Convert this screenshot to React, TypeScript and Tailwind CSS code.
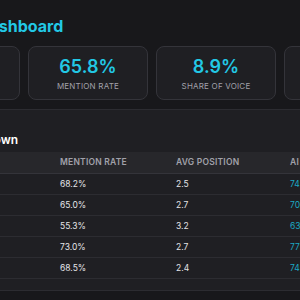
import React from 'react';

const stats = [
  { value: '42', label: 'TOTAL MENTIONS' },
  { value: '65.8%', label: 'MENTION RATE' },
  { value: '8.9%', label: 'SHARE OF VOICE' },
  { value: '2.7', label: 'AVG POSITION' },
];

const rows = [
  { name: 'ChatGPT', rate: '68.2%', pos: '2.5', score: '74' },
  { name: 'Claude', rate: '65.0%', pos: '2.7', score: '70' },
  { name: 'Gemini', rate: '55.3%', pos: '3.2', score: '63' },
  { name: 'Perplexity', rate: '73.0%', pos: '2.7', score: '77' },
  { name: 'Copilot', rate: '68.5%', pos: '2.4', score: '74' },
];

export default function App() {
  return (
    <div
      className="w-[300px] h-[300px] overflow-hidden bg-[#18181b] text-white"
      style={{ fontFamily: 'Inter, "Noto Sans", sans-serif' }}
    >
      <div className="ml-[-100px] w-[520px] pt-[14px]">
        <h1 className="ml-[78px] text-[16px] leading-6 font-bold text-[#22c8e5]">Dashboard</h1>

        <div className="mt-[8px] flex gap-[8px]">
          {stats.map((s) => (
            <div
              key={s.label}
              className="w-[120px] h-[54px] shrink-0 rounded-lg border border-[#34343a] bg-[#1f1f23] flex flex-col items-center justify-center"
            >
              <span className="text-[18px] leading-6 font-semibold text-[#22c8e5]">{s.value}</span>
              <span className="mt-[1px] text-[8px] leading-3 tracking-wide text-[#a1a1aa]">{s.label}</span>
            </div>
          ))}
        </div>

        <div className="mt-[9px] rounded-lg border border-[#2c2c31] bg-[#1f1f23] pt-[22px] pb-[11px]">
          <h2 className="ml-[0px] text-[12px] leading-4 font-semibold text-white whitespace-nowrap">
            Platform Breakdown
          </h2>
          <div className="mt-[4px]">
            <div className="grid grid-cols-[159px_116px_114px_120px] h-[22px] items-center bg-[#27272b] border-b border-[#34343a] text-[8.5px] font-semibold text-[#a1a1aa] tracking-wide">
              <span className="pl-5">PLATFORM</span>
              <span>MENTION RATE</span>
              <span>AVG POSITION</span>
              <span>AI SCORE</span>
            </div>
            {rows.map((r) => (
              <div
                key={r.name}
                className="grid grid-cols-[159px_116px_114px_120px] h-[21px] items-center border-b border-[#2c2c31] text-[8.5px] text-[#e4e4e7]"
              >
                <span className="pl-5">{r.name}</span>
                <span>{r.rate}</span>
                <span>{r.pos}</span>
                <span className="text-[#1ba8c4]">{r.score}</span>
              </div>
            ))}
          </div>
        </div>
      </div>
    </div>
  );
}
